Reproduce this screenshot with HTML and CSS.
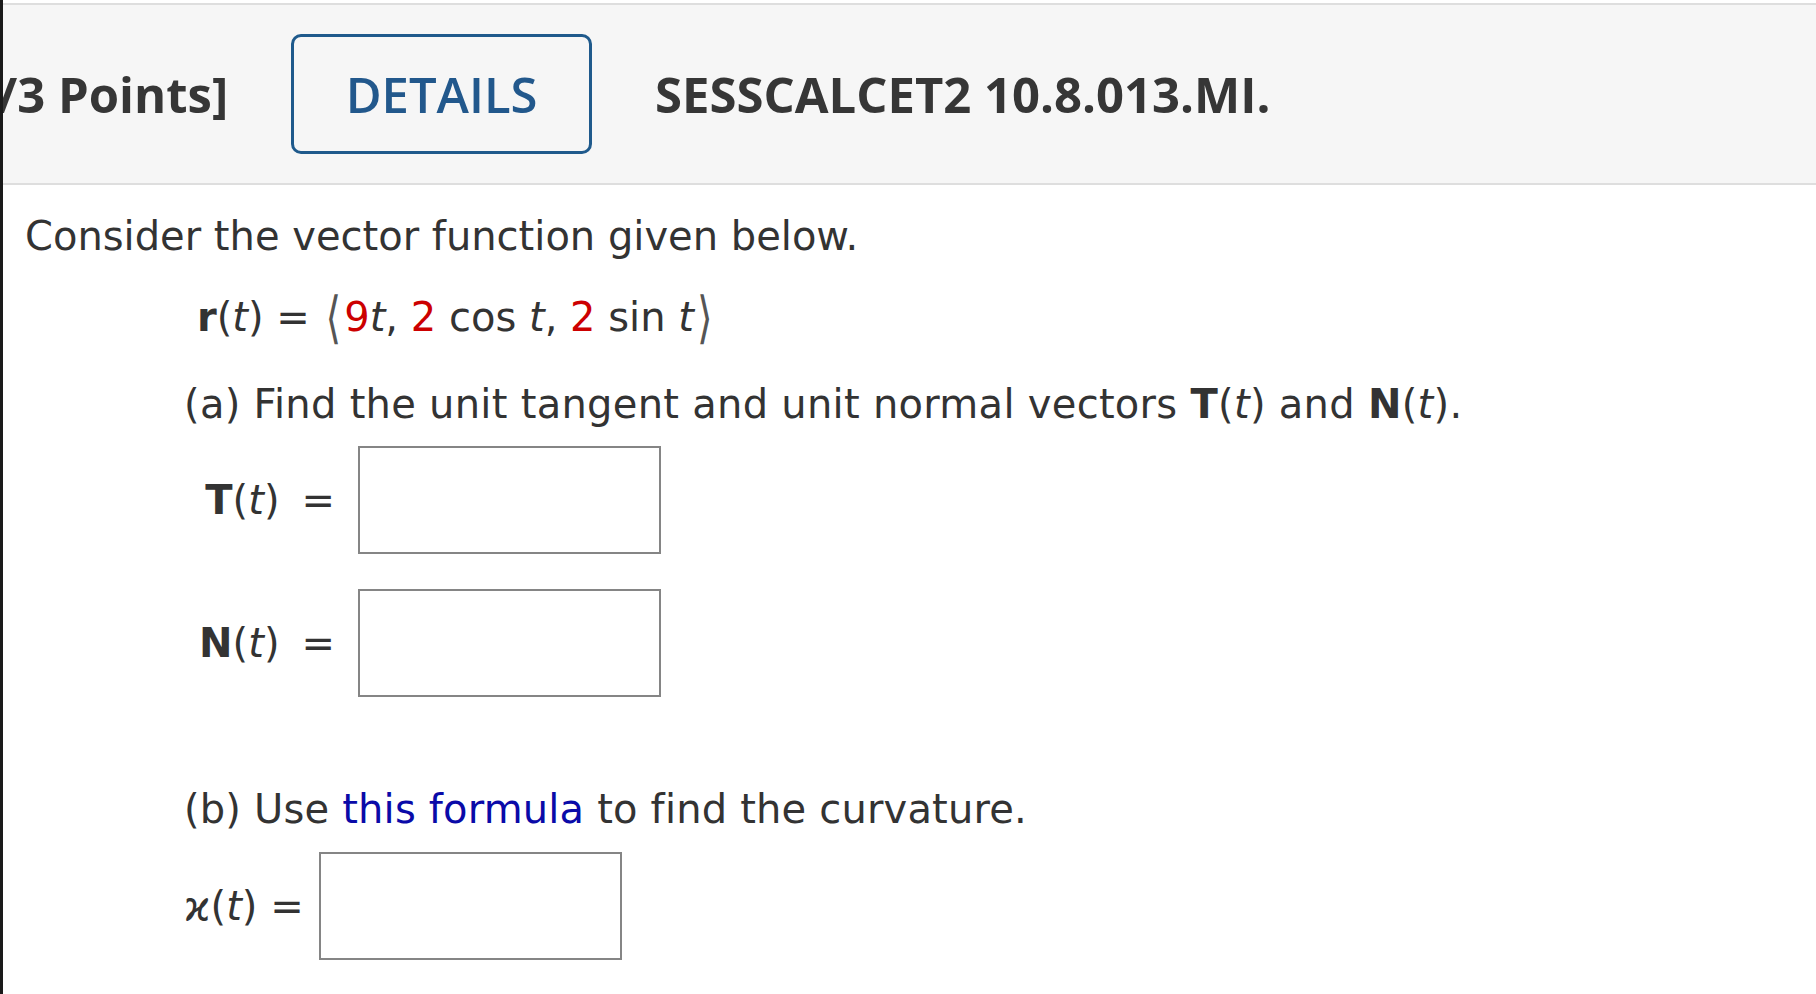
FILE: index.html
```html
<!DOCTYPE html>
<html>
<head>
<meta charset="utf-8">
<link rel="stylesheet" href="styles.css">
</head>
<body>
<div class="page">
  <header class="qhead">
    <span class="points">/3 Points]</span>
    <span class="details">DETAILS</span>
    <span class="qid">SESSCALCET2 10.8.013.MI.</span>
  </header>
  <main class="content">
    <p class="line intro">Consider the vector function given below.</p>
    <p class="line formula"><b class="vec">r</b>(<i>t</i>) = <span class="ang">⟨</span><span class="red">9</span><i>t</i>, <span class="red">2</span> cos <i>t</i>, <span class="red">2</span> sin <i>t</i><span class="ang">⟩</span></p>
    <p class="line part parta">(a) Find the unit tangent and unit normal vectors <b class="vec">T</b>(<i>t</i>) and <b class="vec">N</b>(<i>t</i>).</p>
    <div class="answer first">
      <span class="label"><b class="vec">T</b>(<i>t</i>)<span class="eq">=</span></span>
      <span class="box"></span>
    </div>
    <div class="answer second">
      <span class="label"><b class="vec">N</b>(<i>t</i>)<span class="eq">=</span></span>
      <span class="box"></span>
    </div>
    <p class="line part partb">(b) Use <a class="link">this formula</a> to find the curvature.</p>
    <div class="answer kappa">
      <span class="klabel">ϰ(<i>t</i>) =</span>
      <span class="box"></span>
    </div>
  </main>
</div>
</body>
</html>
```
FILE: styles.css
```css
html, body {
  margin: 0;
  padding: 0;
  background: #ffffff;
}
body {
  font-family: "DejaVu Sans", Verdana, sans-serif;
  color: #333333;
}
.page {
  border-left: 3px solid #1a1a1a;
  min-height: 994px;
  box-sizing: border-box;
  overflow: hidden;
  padding-top: 3px;
}
.qhead {
  display: flex;
  align-items: center;
  gap: 63px;
  height: 178px;
  background: #f6f6f6;
  border-top: 2px solid #dedede;
  border-bottom: 2px solid #dedede;
  font-family: "Open Sans", sans-serif;
  font-size: 49px;
  color: #363636;
}
.points {
  font-weight: 700;
  margin-left: -6px;
  white-space: nowrap;
}
.details {
  box-sizing: border-box;
  width: 301px;
  height: 120px;
  border: 3px solid #1f5a8c;
  border-radius: 10px;
  display: flex;
  align-items: center;
  justify-content: center;
  color: #22588c;
  font-weight: 600;
}
.qid {
  font-weight: 700;
  white-space: nowrap;
}
.content {
  padding-left: 22px;
  font-size: 40px;
  line-height: 48px;
}
.line {
  margin: 0;
  white-space: nowrap;
}
.intro {
  margin-top: 27px;
}
.formula {
  margin-top: 33px;
  margin-left: 172px;
}
.part {
  margin-top: 39px;
  margin-left: 159px;
}
.parta {
  letter-spacing: 0.28px;
}
.vec {
  font-weight: 700;
}
i {
  font-style: oblique;
}
.red {
  color: #cc0000;
}
.ang {
  display: inline-block;
  color: #555;
  margin: 0 3px;
  transform: scaleY(1.4);
}
.answer {
  display: flex;
  align-items: center;
  margin-left: 159px;
}
.answer.first {
  margin-top: 18px;
}
.answer.second {
  margin-top: 35px;
}
.label {
  width: 151px;
  text-align: right;
  margin-right: 23px;
  white-space: nowrap;
  letter-spacing: 0;
}
.eq {
  margin-left: 22px;
}
.box {
  box-sizing: border-box;
  width: 303px;
  height: 108px;
  border: 2px solid #858585;
  background: #fff;
}
.partb {
  margin-top: 88px;
  letter-spacing: 0.18px;
}
.answer.kappa {
  margin-top: 19px;
}
.klabel {
  margin-right: 15px;
  white-space: nowrap;
}
.link {
  color: #0a0aa8;
  text-decoration: none;
}
```
